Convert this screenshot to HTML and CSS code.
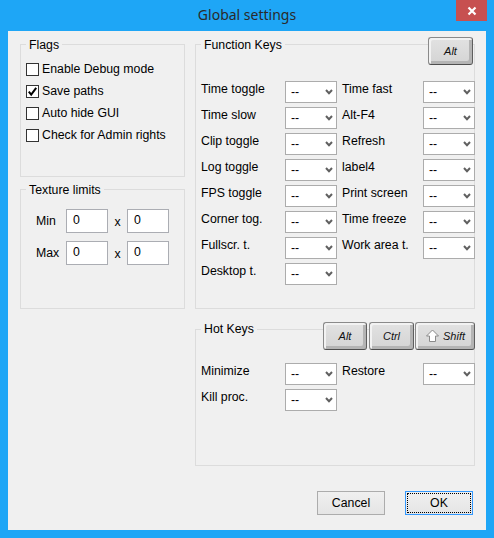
FILE: index.html
```html
<!DOCTYPE html>
<html>
<head>
<meta charset="utf-8">
<title>Global settings</title>
<link rel="stylesheet" href="styles.css">
</head>
<body>
<div class="window">
  <div class="titlebar">
    <div class="title">Global settings</div>
    <div class="close">
      <svg width="10" height="10" viewBox="0 0 10 10"><path d="M1.5 1.5 L8.5 8.5 M8.5 1.5 L1.5 8.5" stroke="#fff" stroke-width="2.2" fill="none"/></svg>
    </div>
  </div>
  <div class="client">
    <div class="columns">
      <div class="leftcol">
        <div class="group flags">
          <div class="ghead ghead-plain"><span class="glabel">Flags</span></div>
          <div class="checks">
            <div class="check"><span class="box"></span><span>Enable Debug mode</span></div>
            <div class="check"><span class="box"><svg width="11" height="11" viewBox="0 0 11 11"><path d="M1.8 5.6 L4.2 8.6 L9.2 1.8" stroke="#000" stroke-width="2" fill="none"/></svg></span><span>Save paths</span></div>
            <div class="check"><span class="box"></span><span>Auto hide GUI</span></div>
            <div class="check"><span class="box"></span><span>Check for Admin rights</span></div>
          </div>
        </div>
        <div class="group texture">
          <div class="ghead ghead-plain"><span class="glabel">Texture limits</span></div>
          <div class="limits">
            <span class="lim-label">Min</span><span class="num">0</span><span class="times">x</span><span class="num">0</span>
            <span class="lim-label">Max</span><span class="num">0</span><span class="times">x</span><span class="num">0</span>
          </div>
        </div>
      </div>
      <div class="rightcol">
        <div class="group fkeys">
          <div class="ghead ghead-keys">
            <span class="glabel fk-label">Function Keys</span>
            <div class="keys fk-keys">
              <span class="key key-alt-fk">Alt</span>
            </div>
          </div>
          <div class="kgrid fk-grid">
            <span class="klabel">Time toggle</span><span class="combo"><span>--</span><svg width="8" height="6" viewBox="0 0 8 6"><path d="M1 1 L4 4.2 L7 1" stroke="#606060" stroke-width="2" fill="none"/></svg></span>
            <span class="klabel k2">Time fast</span><span class="combo"><span>--</span><svg width="8" height="6" viewBox="0 0 8 6"><path d="M1 1 L4 4.2 L7 1" stroke="#606060" stroke-width="2" fill="none"/></svg></span>
            <span class="klabel">Time slow</span><span class="combo"><span>--</span><svg width="8" height="6" viewBox="0 0 8 6"><path d="M1 1 L4 4.2 L7 1" stroke="#606060" stroke-width="2" fill="none"/></svg></span>
            <span class="klabel k2">Alt-F4</span><span class="combo"><span>--</span><svg width="8" height="6" viewBox="0 0 8 6"><path d="M1 1 L4 4.2 L7 1" stroke="#606060" stroke-width="2" fill="none"/></svg></span>
            <span class="klabel">Clip toggle</span><span class="combo"><span>--</span><svg width="8" height="6" viewBox="0 0 8 6"><path d="M1 1 L4 4.2 L7 1" stroke="#606060" stroke-width="2" fill="none"/></svg></span>
            <span class="klabel k2">Refresh</span><span class="combo"><span>--</span><svg width="8" height="6" viewBox="0 0 8 6"><path d="M1 1 L4 4.2 L7 1" stroke="#606060" stroke-width="2" fill="none"/></svg></span>
            <span class="klabel">Log toggle</span><span class="combo"><span>--</span><svg width="8" height="6" viewBox="0 0 8 6"><path d="M1 1 L4 4.2 L7 1" stroke="#606060" stroke-width="2" fill="none"/></svg></span>
            <span class="klabel k2">label4</span><span class="combo"><span>--</span><svg width="8" height="6" viewBox="0 0 8 6"><path d="M1 1 L4 4.2 L7 1" stroke="#606060" stroke-width="2" fill="none"/></svg></span>
            <span class="klabel">FPS toggle</span><span class="combo"><span>--</span><svg width="8" height="6" viewBox="0 0 8 6"><path d="M1 1 L4 4.2 L7 1" stroke="#606060" stroke-width="2" fill="none"/></svg></span>
            <span class="klabel k2">Print screen</span><span class="combo"><span>--</span><svg width="8" height="6" viewBox="0 0 8 6"><path d="M1 1 L4 4.2 L7 1" stroke="#606060" stroke-width="2" fill="none"/></svg></span>
            <span class="klabel">Corner tog.</span><span class="combo"><span>--</span><svg width="8" height="6" viewBox="0 0 8 6"><path d="M1 1 L4 4.2 L7 1" stroke="#606060" stroke-width="2" fill="none"/></svg></span>
            <span class="klabel k2">Time freeze</span><span class="combo"><span>--</span><svg width="8" height="6" viewBox="0 0 8 6"><path d="M1 1 L4 4.2 L7 1" stroke="#606060" stroke-width="2" fill="none"/></svg></span>
            <span class="klabel">Fullscr. t.</span><span class="combo"><span>--</span><svg width="8" height="6" viewBox="0 0 8 6"><path d="M1 1 L4 4.2 L7 1" stroke="#606060" stroke-width="2" fill="none"/></svg></span>
            <span class="klabel k2">Work area t.</span><span class="combo"><span>--</span><svg width="8" height="6" viewBox="0 0 8 6"><path d="M1 1 L4 4.2 L7 1" stroke="#606060" stroke-width="2" fill="none"/></svg></span>
            <span class="klabel">Desktop t.</span><span class="combo"><span>--</span><svg width="8" height="6" viewBox="0 0 8 6"><path d="M1 1 L4 4.2 L7 1" stroke="#606060" stroke-width="2" fill="none"/></svg></span>
          </div>
        </div>
        <div class="group hkeys">
          <div class="ghead ghead-keys">
            <span class="glabel hk-label">Hot Keys</span>
            <div class="keys hk-keys">
              <span class="key key-alt">Alt</span>
              <span class="key key-ctrl">Ctrl</span>
              <span class="key key-shift"><svg width="15" height="14" viewBox="0 0 15 14"><path d="M7.5 1 L13.5 7 L10.5 7 L10.5 12.5 L4.5 12.5 L4.5 7 L1.5 7 Z" fill="#fff" stroke="#8a8a8a" stroke-width="1"/></svg><span>Shift</span></span>
            </div>
          </div>
          <div class="kgrid hk-grid">
            <span class="klabel">Minimize</span><span class="combo"><span>--</span><svg width="8" height="6" viewBox="0 0 8 6"><path d="M1 1 L4 4.2 L7 1" stroke="#606060" stroke-width="2" fill="none"/></svg></span>
            <span class="klabel k2">Restore</span><span class="combo"><span>--</span><svg width="8" height="6" viewBox="0 0 8 6"><path d="M1 1 L4 4.2 L7 1" stroke="#606060" stroke-width="2" fill="none"/></svg></span>
            <span class="klabel">Kill proc.</span><span class="combo"><span>--</span><svg width="8" height="6" viewBox="0 0 8 6"><path d="M1 1 L4 4.2 L7 1" stroke="#606060" stroke-width="2" fill="none"/></svg></span>
          </div>
        </div>
      </div>
    </div>
    <div class="actions">
      <button class="btn">Cancel</button>
      <button class="btn btn-ok">OK</button>
    </div>
  </div>
</div>
</body>
</html>
```

FILE: styles.css
```css
* { box-sizing: border-box; }
html, body { margin: 0; padding: 0; }
body {
  width: 494px;
  height: 538px;
  overflow: hidden;
  background: #1ea6f6;
  font-family: "Liberation Sans", Arial, sans-serif;
  font-size: 12.3px;
  color: #000;
}
.window { display: flex; flex-direction: column; height: 538px; }

.titlebar {
  height: 31px;
  display: grid;
  grid-template-columns: 1fr auto 1fr;
}
.title {
  grid-column: 2;
  font-family: "Noto Sans", "Open Sans", sans-serif;
  font-size: 14px;
  line-height: 29px;
  color: #2a2a2a;
}
.close {
  grid-column: 3;
  justify-self: end;
  align-self: start;
  width: 31px;
  height: 21px;
  margin-right: 7px;
  background: #c75050;
  display: flex;
  align-items: center;
  justify-content: center;
}
.close svg { display: block; }

.client {
  background: #f0f0f0;
  margin: 0 8px 8px;
  height: 499px;
  padding: 13px 11px 0 12px;
  display: flex;
  flex-direction: column;
}
.columns { display: flex; gap: 10px; }
.leftcol { width: 165px; display: flex; flex-direction: column; gap: 12px; }
.rightcol { width: 280px; display: flex; flex-direction: column; gap: 20px; }

.group { border: 1px solid #dcdcdc; }
.flags { height: 133px; }
.texture { height: 120px; }
.fkeys { height: 265px; }
.hkeys { height: 137px; }

.ghead { display: flex; align-items: flex-start; }
.ghead-plain { margin-top: -7px; height: 15px; }
.ghead-keys { margin-top: -8px; height: 28px; }
.glabel {
  line-height: 15px;
  background: #f0f0f0;
  padding: 0 3px;
  margin-left: 5px;
}
.fk-label { margin-top: 1px; }
.hk-label { margin-top: 0; }

/* checkboxes */
.checks { margin-top: 6px; padding-left: 5px; display: flex; flex-direction: column; }
.check { height: 22px; display: flex; align-items: flex-start; }
.check > span:last-child { line-height: 15px; margin-top: 3px; margin-left: 3px; }
.box {
  width: 13px;
  height: 13px;
  margin-top: 4px;
  border: 1px solid #333;
  background: #fff;
  display: flex;
  align-items: center;
  justify-content: center;
}
.box svg { display: block; }

/* texture limits */
.limits {
  margin-top: 11px;
  padding-left: 15px;
  display: grid;
  grid-template-columns: 30px 42px 19px 42px;
  grid-auto-rows: 24px;
  row-gap: 8px;
  align-items: center;
}
.lim-label { line-height: 15px; }
.times { text-align: center; padding-top: 2px; }
.num {
  width: 42px;
  height: 24px;
  border: 1px solid #abadb3;
  background: #fff;
  padding-left: 6px;
  line-height: 21px;
}

/* key buttons */
.keys { margin-left: auto; display: flex; }
.fk-keys { margin-right: 1px; }
.hk-keys { margin-right: -1px; }
.key {
  height: 28px;
  display: flex;
  align-items: center;
  justify-content: center;
  gap: 3px;
  font-style: italic;
  font-size: 11px;
  color: #111;
  border: 1px solid #8a8a8a;
  border-right-color: #5e5e5e;
  border-bottom-color: #4e4e4e;
  border-radius: 3px;
  background: linear-gradient(#e2e2e2, #d4d4d4);
  box-shadow: inset 2px 2px 0 #f2f2f2, inset -3px -3px 0 #b4b4b4;
  padding-bottom: 1px;
}
.key-alt-fk { width: 45px; }
.key-alt { width: 44px; }
.key-ctrl { width: 45px; margin-left: 2px; }
.key-shift { width: 60px; margin-left: 1px; }
.key svg { display: block; }

/* combos */
.kgrid {
  padding-left: 5px;
  display: grid;
  grid-template-columns: 84px 52px 86px 52px;
  grid-auto-rows: 22px;
  row-gap: 4px;
}
.fk-grid { margin-top: 16px; }
.hk-grid { margin-top: 13px; }
.klabel { line-height: 15px; padding-top: 1px; white-space: nowrap; }
.k2 { padding-left: 5px; }
.combo {
  width: 52px;
  height: 22px;
  border: 1px solid #acacac;
  background: #fff;
  display: flex;
  align-items: center;
  justify-content: space-between;
  padding: 0 3px 0 5px;
}
.combo svg { display: block; }

/* dialog buttons */
.actions {
  margin-top: 25px;
  padding-right: 2px;
  display: flex;
  justify-content: flex-end;
  gap: 20px;
}
.btn {
  width: 68px;
  height: 24px;
  margin: 0;
  padding: 0;
  font-family: inherit;
  font-size: 12.3px;
  color: #000;
  border: 1px solid #acacac;
  border-radius: 0;
  background: linear-gradient(#f0f0f0, #e5e5e5);
}
.btn-ok {
  border-color: #3399ff;
  outline: 1px dotted #000;
  outline-offset: -3px;
}
```
